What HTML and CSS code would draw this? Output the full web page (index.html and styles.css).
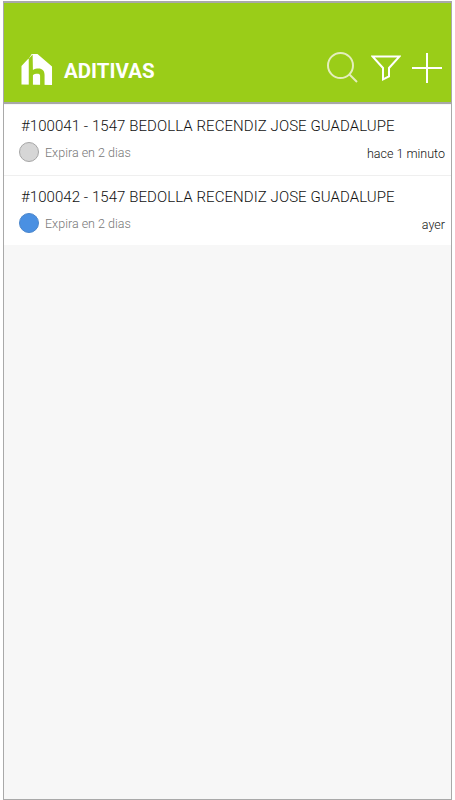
FILE: index.html
```html
<!DOCTYPE html>
<html lang="en">
<head>
    <meta charset="UTF-8">
    <meta name="viewport" content="width=device-width, initial-scale=1.0">
    <title>Aditivas</title>
    <link rel="stylesheet" href="styles.css">
</head>
<body>
    <div class="phone">
        <header class="topbar">
            <svg class="logo" viewBox="0 0 33 33" width="32" height="33">
                <path fill="#fff" d="M0.5 13 7 6 8 5.5 11 0.5 17 0.5 32 13.5V32.5L0.5 32Z"/>
                <path fill="#9acd18" d="M8 5.5 12 1 12.3 17C14 15.8 16 15.5 18 15.5 22 15.5 24.3 18 24.3 22V33H19.7V23C19.7 21.5 18.5 21 17 21 15 21 13.3 21.5 12.3 22.5V33H8Z"/>
            </svg>
            <h1 class="title">ADITIVAS</h1>
            <div class="actions">
                <svg class="icon" viewBox="0 0 31 31" width="31" height="31">
                    <circle cx="13.5" cy="13.5" r="12.5" stroke="#e4eebd"/>
                    <path d="M22.5 22.5 30 30" stroke="#e4eebd"/>
                </svg>
                <svg class="icon icon-filter" viewBox="0 0 30 27" width="30" height="27">
                    <path d="M1.5 1.5H28.5L18 13V21.5L12 24.5V13Z"/>
                </svg>
                <svg class="icon icon-plus" viewBox="0 0 30 30" width="30" height="30">
                    <path d="M0 15H30M15 0V30"/>
                </svg>
            </div>
        </header>
        <ul class="list">
            <li class="item">
                <div class="item-title">#100041 - 1547 BEDOLLA RECENDIZ JOSE GUADALUPE</div>
                <div class="item-meta">
                    <span class="dot dot-grey"></span>
                    <span class="expires">Expira en 2 dias</span>
                    <span class="when">hace 1 minuto</span>
                </div>
            </li>
            <li class="item">
                <div class="item-title">#100042 - 1547 BEDOLLA RECENDIZ JOSE GUADALUPE</div>
                <div class="item-meta">
                    <span class="dot dot-blue"></span>
                    <span class="expires">Expira en 2 dias</span>
                    <span class="when">ayer</span>
                </div>
            </li>
        </ul>
    </div>
</body>
</html>
```
FILE: styles.css
```css
* {box-sizing: border-box;}
html, body {height: 100%;}
body {margin: 0; padding: 1px 3px 0 3px; background: #fff; font-family: Roboto, "Liberation Sans", sans-serif; overflow: hidden;}

.phone {height: 799px; background: #f7f7f7; border: 1px solid #a9a9a9; border-top-width: 2px;}

.topbar {height: 101px; margin-bottom: 1px; background: #9acd18; border-bottom: 2px solid #a8a8a8; padding: 48px 9px 0 17px; display: flex; align-items: flex-start; color: #fff;}
.logo {display: block; margin-top: 2px; flex: none;}
.title {margin: 8px 0 0 11px; font-size: 20.5px; line-height: 24px; font-weight: 700;}
.actions {margin-left: auto; display: flex; align-items: flex-start; margin-top: 1px;}
.icon {display: block; fill: none; stroke: #fff; stroke-width: 2;}
.icon-filter {margin: 3px 0 0 13px;}
.icon-plus {margin: 1px 0 0 11px;}

.list {list-style: none; margin: 0; padding: 0;}
.item {background: #fff; height: 71px; padding: 12px 6px 0 17px; border-bottom: 1px solid #efefef;}
.item:last-child {height: 69px; border-bottom: 0;}
.item-title {font-size: 15px; line-height: 18px; font-weight: 300; color: #111; letter-spacing: 0.07px;}
.item-meta {display: flex; align-items: center; margin-top: 7px; margin-left: -2px; height: 20px;}
.dot {width: 20px; height: 20px; border-radius: 50%; flex: none;}
.dot-grey {background: #d6d6d6; border: 1px solid #a6a6a6;}
.dot-blue {background: #4a90e2; border: 1px solid #4a86cc;}
.expires {margin-left: 6px; font-size: 12.5px; font-weight: 300; color: #777;}
.when {margin-left: auto; margin-top: 3px; font-size: 12.5px; font-weight: 300; color: #111;}
```
